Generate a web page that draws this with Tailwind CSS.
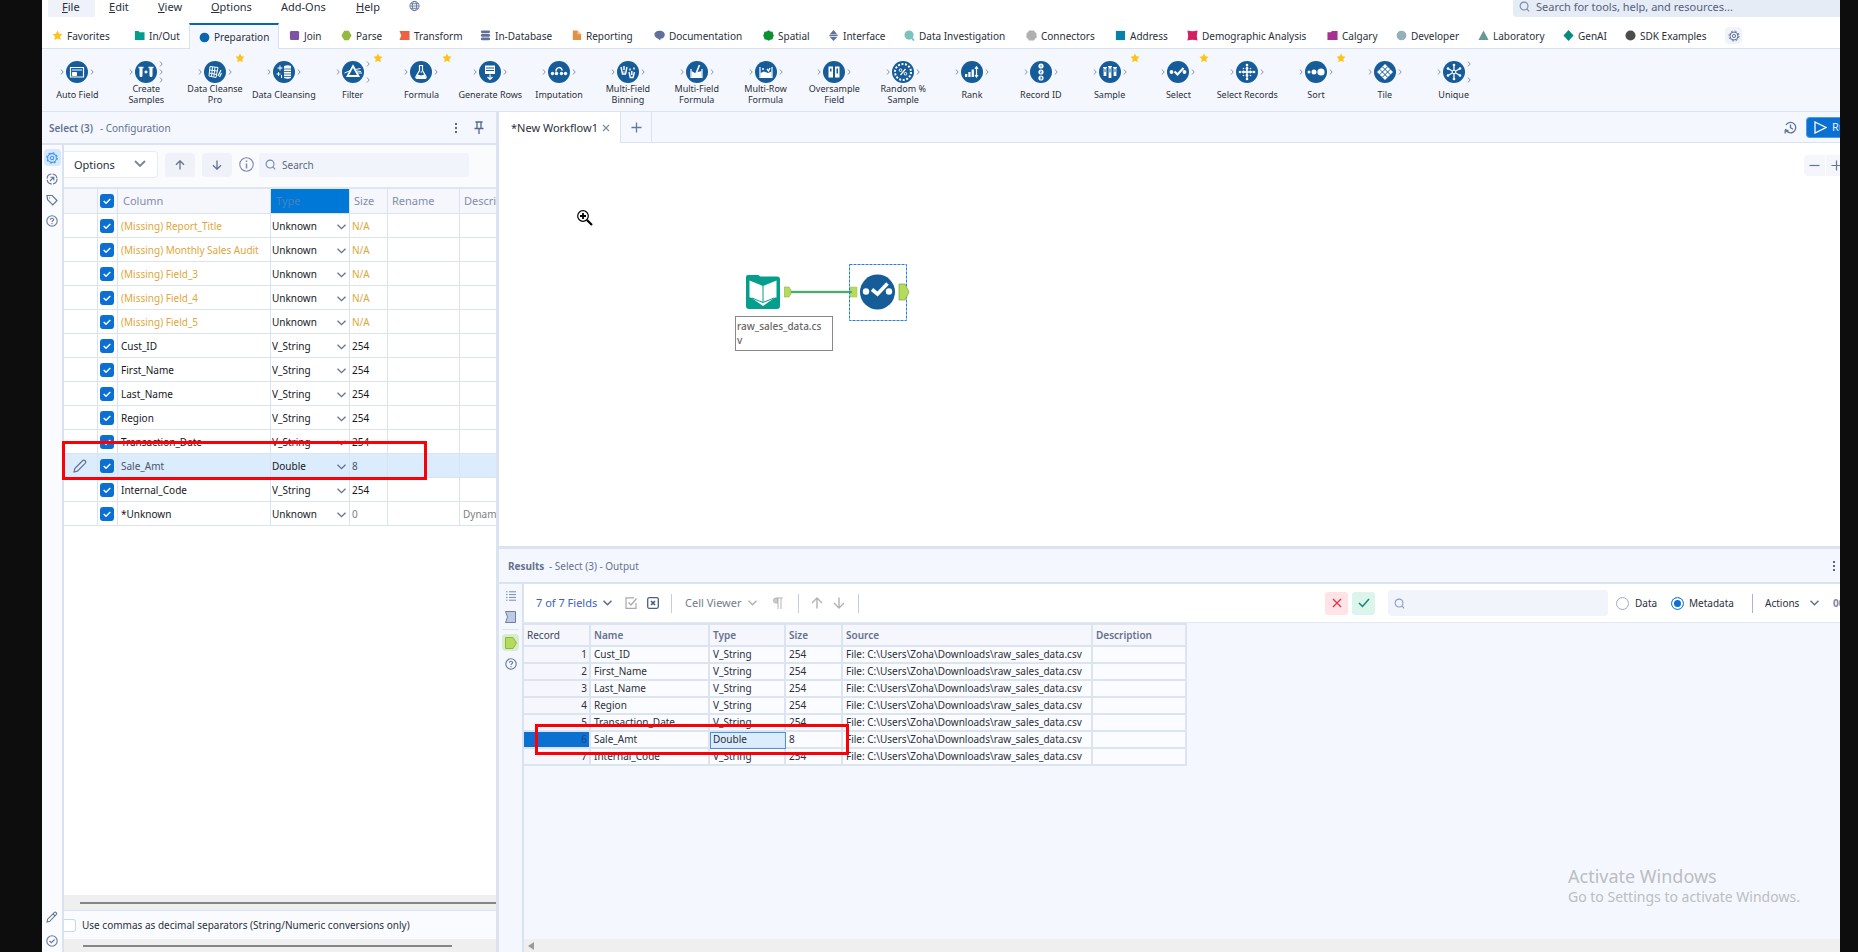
<!DOCTYPE html>
<html lang="en">
<head>
    <meta charset="UTF-8">
    <meta name="viewport" content="width=device-width, initial-scale=1.0">
    <title>Designer - New Workflow1</title>
    <script src="https://cdn.jsdelivr.net/npm/@tailwindcss/browser@4"></script>
</head>
<body class="h-screen overflow-hidden bg-[#0d0d0d] pl-[42px] pr-[18px] font-['Noto_Sans','Open_Sans',sans-serif] text-[11px] leading-4 text-[#2b2f3a]">
<div class="relative flex h-full flex-col overflow-hidden bg-[#f4f8fe]">

    <!-- Menu bar -->
    <header class="flex h-[23px] shrink-0 items-start justify-between bg-white">
        <nav class="flex pl-[6px]">
            <a href="#" class="h-[17px] w-[47px] bg-[#eff2f9] pl-[14px] leading-[14px]"><u>F</u>ile</a>
            <a href="#" class="w-[49px] pl-[14px] leading-[14px]"><u>E</u>dit</a>
            <a href="#" class="w-[53px] pl-[14px] leading-[14px]"><u>V</u>iew</a>
            <a href="#" class="w-[70px] pl-[14px] leading-[14px]"><u>O</u>ptions</a>
            <a href="#" class="w-[75px] pl-[14px] leading-[14px]">Add-Ons</a>
            <a href="#" class="w-[67px] pl-[14px] leading-[14px]"><u>H</u>elp</a>
            <button aria-label="Language" class="flex h-3 w-3">
                <svg width="11" height="12" viewBox="0 0 12 12" fill="none" stroke="#66759b"><circle cx="6" cy="6" r="5"/><ellipse cx="6" cy="6" rx="2.3" ry="5"/><path d="M1 6h10M1.7 3.5h8.6M1.7 8.5h8.6"/></svg>
            </button>
        </nav>
        <label class="flex h-[17px] w-[327px] items-start gap-[6px] rounded-bl bg-[#e6ecf5] pl-[6px]">
            <svg class="mt-px" width="11" height="11" viewBox="0 0 12 12" fill="none" stroke="#7a88ab" stroke-width="1.2"><circle cx="5.5" cy="5.5" r="4.3"/><path d="M8.6 8.6l2.4 2.6"/></svg>
            <input type="text" aria-label="Search" placeholder="Search for tools, help, and resources..." class="h-[13px] w-[260px] bg-transparent text-[11px] leading-[13px] outline-none placeholder:text-[#55607d]">
        </label>
    </header>

    <!-- Tool category tabs -->
    <div id="categories" class="flex h-[26px] shrink-0 items-stretch border-b border-[#d9e1ef] bg-white"></div>

    <!-- Tool palette -->
    <div class="h-[63px] shrink-0 border-b border-[#dbe3ef]">
        <div id="tools" class="ml-px flex w-[1445px]"></div>
    </div>

    <main class="flex min-h-0 flex-1">

        <!-- Configuration -->
        <section class="relative flex w-[454px] shrink-0 flex-col">
            <div class="flex h-[33px] shrink-0 items-center border-b-2 border-[#dbe3f0] pl-[7px] pr-3 text-[10px] text-[#66718f]">
                <b class="font-semibold">Select (3)</b><span class="ml-[7px]">- Configuration</span>
                <button aria-label="More" class="ml-auto mr-[16px]">
                    <svg width="4" height="12" viewBox="0 0 4 12" fill="#56658c"><path d="M1 1h2v2H1zM1 5h2v2H1zM1 9h2v2H1z"/></svg>
                </button>
                <button aria-label="Pin">
                    <svg width="10" height="13" viewBox="0 0 10 13" fill="none" stroke="#56658c" stroke-width="1.3"><path d="M1.5 1h7M3 1v6M7 1v6M.5 7.5h9M5 7.5V13"/></svg>
                </button>
            </div>
            <div class="flex min-h-0 flex-1">
                <div class="flex w-[22px] shrink-0 flex-col items-center gap-[4px] border-r-2 border-[#d9e2f1] bg-[#f9fbfe] pb-[3px] pt-[4px]">
                    <button aria-label="Configuration" class="flex h-[17px] w-[17px] items-center justify-center rounded-sm bg-[#d5e8fd]"><svg width="12" height="12" viewBox="0 0 12 12" fill="none" stroke="#3d94f0" stroke-width="1.1"><circle cx="6" cy="6" r="4.4"/><circle cx="6" cy="6" r="1.7"/><circle cx="6" cy="6" r="5.3" stroke-dasharray="2 2.16"/></svg></button>
                    <button aria-label="Navigation" class="flex h-[17px] w-[17px] items-center justify-center"><svg width="12" height="12" viewBox="0 0 12 12" fill="none" stroke="#66759b" stroke-width="1.1"><circle cx="6" cy="6" r="5" stroke-dasharray="6.5 1.35"/><path d="M4 8l3.6-3.6M4.5 4.2h3.3v3.3"/></svg></button>
                    <button aria-label="Annotation" class="flex h-[17px] w-[17px] items-center justify-center"><svg width="12" height="12" viewBox="0 0 12 12" fill="none" stroke="#66759b" stroke-width="1.2"><path d="M1 1.5h5.2l4.8 5-4.2 4.3L1.6 5.6z"/><path d="M3.6 3.6v1"/></svg></button>
                    <button aria-label="Help" class="flex h-[17px] w-[17px] items-center justify-center"><svg width="12" height="12" viewBox="0 0 12 12" fill="none" stroke="#66759b" stroke-width="1.1"><circle cx="6" cy="6" r="5.2"/><path d="M4.4 4.8c0-2 3.2-2 3.2-.1 0 1.1-1.6 1.1-1.6 2.2M6 8v1.2"/></svg></button>
                    <button aria-label="Edit" class="mt-auto flex h-[17px] w-[17px] items-center justify-center"><svg width="12" height="12" viewBox="0 0 12 12" fill="none" stroke="#66759b" stroke-width="1.1"><path d="M1 11l.6-2.8 6.6-6.6q1-1 2 0t0 2L3.7 10.3zM7 2.8l2 2"/></svg></button>
                    <button aria-label="Status" class="mt-[3px] flex h-[17px] w-[17px] items-center justify-center"><svg width="12" height="12" viewBox="0 0 12 12" fill="none" stroke="#66759b" stroke-width="1.1"><circle cx="6" cy="6" r="5.2"/><path d="M3.5 6l1.8 1.7 3.3-3.2"/></svg></button>
                </div>
                <div class="flex min-w-0 flex-1 flex-col bg-white">
                    <div class="flex h-[42px] shrink-0 items-center bg-[#fafbfd] pb-[3px]">
                        <div class="relative">
                            <select aria-label="Options" class="h-[27px] w-[94px] appearance-none rounded-r border border-l-0 border-[#e6eaf3] bg-white pl-[10px] text-[11px]"><option>Options</option></select>
                            <svg class="pointer-events-none absolute right-[12px] top-[9px]" width="12" height="8" viewBox="0 0 12 8" fill="none" stroke="#7a8399" stroke-width="1.8"><path d="M1 1l5 5 5-5"/></svg>
                        </div>
                        <button aria-label="Move up" class="ml-[7px] flex h-[24px] w-[30px] items-center justify-center rounded bg-[#eff2f8]"><svg width="10" height="10" viewBox="0 0 10 10" fill="none" stroke="#66718f" stroke-width="1.3"><path d="M5 9.5V1M1 4.8l4-4 4 4"/></svg></button>
                        <button aria-label="Move down" class="ml-[7px] flex h-[24px] w-[30px] items-center justify-center rounded bg-[#eff2f8]"><svg width="10" height="10" viewBox="0 0 10 10" fill="none" stroke="#66718f" stroke-width="1.3"><path d="M5 .5V9M1 5.2l4 4 4-4"/></svg></button>
                        <svg class="ml-[7px]" width="15" height="15" viewBox="0 0 15 15" fill="none" stroke="#7c8bb0" stroke-width="1.1"><circle cx="7.5" cy="7.5" r="6.7"/><path d="M7.5 6.5v5M7.5 3.5v1.5" stroke-width="1.5"/></svg>
                        <label class="ml-[5px] flex h-[24px] w-[210px] items-center gap-[6px] rounded bg-[#f1f4fa] pl-[6px]">
                            <svg width="11" height="11" viewBox="0 0 12 12" fill="none" stroke="#7a88ab" stroke-width="1.2"><circle cx="5.5" cy="5.5" r="4.3"/><path d="M8.6 8.6l2.4 2.6"/></svg>
                            <input type="text" aria-label="Search columns" placeholder="Search" class="w-[150px] bg-transparent text-[10px] outline-none placeholder:text-[#5d6883]">
                        </label>
                    </div>
                    <div class="min-h-0 flex-1 overflow-hidden">
                        <table class="w-[540px] table-fixed border-separate border-spacing-0 border-t-2 border-[#dfe6f2] text-[10px]">
                            <colgroup><col class="w-[34px]"><col class="w-[20px]"><col class="w-[153px]"><col class="w-[79px]"><col class="w-[38px]"><col class="w-[72px]"><col class="w-[144px]"></colgroup>
                            <thead>
                                <tr class="h-[25px] bg-[#f5f7fc] text-left text-[11px] text-[#828da8] [&>th]:border-b [&>th]:border-r [&>th]:border-[#dbe3f2] [&>th]:font-normal">
                                    <th></th>
                                    <th class="pl-[2px]">
                                        <label class="relative block h-[14px] w-[14px]"><input type="checkbox" checked aria-label="Select all" class="block h-[14px] w-[14px] appearance-none rounded-[3px] border border-[#9aa6c0] checked:border-0 checked:bg-[#0b70d2]"><svg class="absolute left-[3px] top-[4px]" width="8" height="7" viewBox="0 0 8 7" fill="none" stroke="#fff" stroke-width="1.4"><path d="M.7 3l2.3 2.3L7.3 1"/></svg></label>
                                    </th>
                                    <th class="pl-[5px]">Column</th>
                                    <th class="bg-[#0078d7] pl-[5px] text-[#4384bf]">Type</th>
                                    <th class="pl-[4px]">Size</th>
                                    <th class="pl-[4px]">Rename</th>
                                    <th class="pl-[4px]">Description</th>
                                </tr>
                            </thead>
                            <tbody id="columns"></tbody>
                        </table>
                    </div>
                    <div class="flex h-[16px] shrink-0 items-center border-b border-[#dbe3f2] bg-[#efefef] pl-[16px]"><div class="h-[2px] flex-1 bg-[#868686]"></div></div>
                    <label class="flex h-[28px] shrink-0 items-center gap-[6px] bg-[#f9fbfe] text-[10px]">
                        <input type="checkbox" class="h-[13px] w-[12px] appearance-none rounded-r-[3px] border border-l-0 border-[#ccd7ea] bg-white">
                        Use commas as decimal separators (String/Numeric conversions only)
                    </label>
                    <div class="flex h-[13px] shrink-0 items-center bg-[#efefef] pl-[19px]"><div class="h-[2px] w-[369px] bg-[#868686]"></div></div>
                </div>
            </div>
            <!-- highlight around the Sale_Amt row -->
            <div class="pointer-events-none absolute left-[20px] top-[329px] h-[39px] w-[365px] border-[3px] border-[#fb0007]"></div>
        </section>

        <div class="w-[3px] shrink-0 bg-[#dbe3f0]"></div>

        <div class="flex min-w-0 flex-1 flex-col">
            <!-- Workflow tabs -->
            <div class="flex h-[31px] shrink-0 items-stretch">
                <div class="flex w-[121px] items-center justify-between bg-white pl-[12px] pr-[10px]">
                    <span>*New Workflow1</span>
                    <button aria-label="Close"><svg width="8" height="8" viewBox="0 0 8 8" stroke="#7f8db0" stroke-width="1.3"><path d="M1 1l6 6M7 1L1 7"/></svg></button>
                </div>
                <button aria-label="New tab" class="flex w-[32px] items-center justify-center border-x border-b border-[#dbe3f2]"><svg width="11" height="11" viewBox="0 0 11 11" stroke="#66759b" stroke-width="1.3"><path d="M5.5.5v10M.5 5.5h10"/></svg></button>
                <div class="flex flex-1 items-center justify-end border-b border-[#dbe3f2]">
                    <button aria-label="History" class="mr-[9px]"><svg width="13" height="13" viewBox="0 0 13 13" fill="none" stroke="#66718f" stroke-width="1.3"><path d="M1.5 8A5.2 5.2 0 1 0 2 4M4.5 9.5H1.2V12.5M6.5 3.5v3.2L9 8.2"/></svg></button>
                    <button class="flex h-[21px] w-[34px] items-center gap-[5px] overflow-hidden rounded-l border border-r-0 border-[#4c9be8] bg-[#0b70d2] pl-[7px] text-[#e6f1fc]"><svg class="shrink-0" width="13" height="13" viewBox="0 0 13 13" fill="none" stroke="#fff" stroke-width="1.3"><path d="M1 1l11 5.5L1 12z"/></svg>Run</button>
                </div>
            </div>

            <!-- Canvas -->
            <section class="relative min-h-0 flex-1 bg-white">
                <div class="absolute right-0 top-[12px] flex gap-px">
                    <button aria-label="Zoom out" class="flex h-[21px] w-[21px] items-center justify-center rounded-l bg-[#f4f6fb]"><svg width="11" height="11" viewBox="0 0 11 11" stroke="#66759b" stroke-width="1.2"><path d="M.5 5.5h10"/></svg></button>
                    <button aria-label="Zoom in" class="flex h-[21px] w-[14px] items-center overflow-hidden bg-[#f4f6fb] pl-[5px]"><svg class="shrink-0" width="11" height="11" viewBox="0 0 11 11" stroke="#66759b" stroke-width="1.2"><path d="M.5 5.5h10M5.5.5v10"/></svg></button>
                </div>
                <svg class="absolute left-[77px] top-[66px]" width="18" height="18" viewBox="0 0 18 18" fill="none" stroke="#000"><circle cx="7" cy="7" r="5.3" stroke-width="1.2"/><path d="M4 7h6M7 4v6" stroke-width="1.8"/><path d="M11 11l5 5" stroke-width="2.2"/></svg>

                <!-- input tool -->
                <svg class="absolute left-[246px] top-[131px]" width="36" height="36" viewBox="0 0 36 36">
                    <path d="M1 3q0-2 2-2h10q1.5 0 2 1.5h17q3 0 3 3V32q0 3-3 3H4q-3 0-3-3z" fill="#049e8c"/>
                    <path d="M4.5 6.500L18 12l13.500-5.500V23.500h-1.500L18 32 6 23.500H4.500z" fill="#fff"/><path d="M18 11v17M7 24l11 4.500L29 24" fill="none" stroke="#049e8c"/>
                </svg>
                <svg class="absolute left-[285px] top-[141px]" width="74" height="16" viewBox="0 0 74 16">
                    <path d="M0 3h5l2 3v4l-2 3H0z" fill="#b5db5c" stroke="#8ab55a" stroke-width=".6"/><path d="M66 3h7v10h-7z" fill="#b5db5c" stroke="#a4c95c" stroke-width=".6"/>
                    <path d="M7 8h61" stroke="#7ccb9a" stroke-width="2.4"/><path d="M7 8h61" stroke="#1a8a45"/>
                </svg>
                <div class="absolute left-[236px] top-[173px] h-[35px] w-[98px] border border-[#878787] bg-white pl-px pr-[8px] pt-[2px] text-[10px] font-medium leading-[14px] text-[#666] [overflow-wrap:anywhere]">raw_sales_data.csv</div>
                <!-- select tool -->
                <svg class="absolute left-[349px] top-[120px]" width="64" height="60" viewBox="0 0 64 60">
                    <rect x="1.5" y="1.5" width="57" height="56" fill="none" stroke="#1f7fe0" stroke-dasharray="3 1"/>
                    <circle cx="29.500" cy="29" r="17.5" fill="#155c99"/><circle cx="18" cy="28.5" r="3.2" fill="#fff"/><circle cx="41" cy="28.5" r="3.2" fill="#fff"/><path d="M24 26.500l5.500 4.500 10-10.500" fill="none" stroke="#fff" stroke-width="3.6"/>
                    <path d="M51 21h6l4 8-4 8h-6z" fill="#b5db5c" stroke="#7fae3e" stroke-width=".8"/>
                </svg>
            </section>

            <!-- Results -->
            <section class="relative flex h-[406px] shrink-0 flex-col border-t-[3px] border-[#dbe3f0]">
                <div class="flex h-[35px] shrink-0 items-center justify-between border-b-2 border-[#dbe3f0] pl-[9px] pr-[4px] text-[10px] text-[#66718f]">
                    <p><b class="mr-[2px] font-bold">Results</b> - Select (3) - Output</p>
                    <button aria-label="More"><svg width="4" height="12" viewBox="0 0 4 12" fill="#56658c"><path d="M1 1h2v2H1zM1 5h2v2H1zM1 9h2v2H1z"/></svg></button>
                </div>
                <div class="flex min-h-0 flex-1">
                    <div class="flex w-[25px] shrink-0 flex-col items-center gap-[4px] border-r-2 border-[#d9e2f1] pt-[3px]">
                        <button aria-label="Messages" class="flex h-[17px] w-[17px] items-center justify-center"><svg width="10" height="10" viewBox="0 0 10 10" fill="none" stroke="#7886ab"><path d="M0 .8h1.5M3 .8h7M0 3.6h1.5M3 3.6h7M0 6.4h1.5M3 6.4h7M0 9.2h1.5M3 9.2h7"/></svg></button>
                        <button aria-label="Input anchor" class="flex h-[17px] w-[17px] items-center justify-center"><svg width="11" height="12" viewBox="0 0 11 12" fill="#bccae6" stroke="#6f7fa6"><path d="M.5.5h10v11H.5l2-5.5z"/></svg></button>
                        <div class="h-px w-[17px] shrink-0 bg-[#dbe3f2]"></div>
                        <button aria-label="Output anchor" class="flex h-[17px] w-[17px] items-center justify-center rounded-sm bg-[#d9ecc9]"><svg width="12" height="12" viewBox="0 0 12 12" fill="#b5db5c" stroke="#8cb83f"><path d="M.5.5H8L11.5 6 8 11.5H.5z"/></svg></button>
                        <button aria-label="Help" class="flex h-[17px] w-[17px] items-center justify-center"><svg width="12" height="12" viewBox="0 0 12 12" fill="none" stroke="#66759b" stroke-width="1.1"><circle cx="6" cy="6" r="5.2"/><path d="M4.4 4.8c0-2 3.2-2 3.2-.1 0 1.1-1.6 1.1-1.6 2.2M6 8v1.2"/></svg></button>
                    </div>
                    <div class="flex min-w-0 flex-1 flex-col">
                        <div class="flex h-[39px] shrink-0 items-center border-b border-[#e2e7f2] bg-white pl-[12px]">
                            <button class="flex w-[89px] items-center gap-[6px] text-[#3c61c4]">7 of 7 Fields<svg width="9" height="6" viewBox="0 0 9 6" fill="none" stroke="#5a6a94" stroke-width="1.5"><path d="M.5.8l4 4 4-4"/></svg></button>
                            <button aria-label="Select all fields" class="w-[22px]"><svg width="13" height="12" viewBox="0 0 13 12" fill="none" stroke="#a9a9a9" stroke-width="1.2"><path d="M9 .8H1v10.5h10V6M3.5 5.5L6 8l5.5-6.5"/></svg></button>
                            <button aria-label="Clear fields"><svg width="12" height="12" viewBox="0 0 12 12" fill="none" stroke="#4c5d86" stroke-width="1.3"><rect x=".7" y=".7" width="10.6" height="10.6" rx="1.5"/><path d="M4 4l4 4M8 4L4 8" stroke-width="1.7"/></svg></button>
                            <div class="ml-[12px] h-[19px] w-px bg-[#c3cde0]"></div>
                            <button class="ml-[13px] flex w-[82px] items-center gap-[6px] text-[#757b8a]">Cell Viewer<svg width="9" height="6" viewBox="0 0 9 6" fill="none" stroke="#b0b0b0" stroke-width="1.3"><path d="M.5.8l4 4 4-4"/></svg></button>
                            <button aria-label="Show whitespace" class="ml-[6px]"><svg width="10" height="12" viewBox="0 0 10 12" stroke="#b4b4b4" fill="none"><path d="M4.5 1H3a2.5 2.5 0 0 0 0 5h1.5z" fill="#ccc"/><path d="M4 1h6M5 1v11M8 1v11"/></svg></button>
                            <div class="ml-[15px] h-[19px] w-px bg-[#c3cde0]"></div>
                            <button aria-label="Previous" class="ml-[12px]"><svg width="12" height="12" viewBox="0 0 12 12" fill="none" stroke="#b2b2b2" stroke-width="1.4"><path d="M6 11.5V1M1 6l5-5 5 5"/></svg></button>
                            <button aria-label="Next" class="ml-[10px]"><svg width="12" height="12" viewBox="0 0 12 12" fill="none" stroke="#b2b2b2" stroke-width="1.4"><path d="M6 .5V11M1 6l5 5 5-5"/></svg></button>
                            <div class="ml-[13px] h-[19px] w-px bg-[#c3cde0]"></div>

                            <button aria-label="Cancel" class="ml-auto flex h-[23px] w-[23px] items-center justify-center rounded-[3px] bg-[#ffe3e6]"><svg width="10" height="10" viewBox="0 0 10 10" stroke="#d93a50" stroke-width="1.4"><path d="M1 1l8 8M9 1L1 9"/></svg></button>
                            <button aria-label="Apply" class="ml-[4px] flex h-[23px] w-[23px] items-center justify-center rounded-[3px] bg-[#dbf4ec]"><svg width="12" height="10" viewBox="0 0 12 10" fill="none" stroke="#12876a" stroke-width="1.5"><path d="M1 5l3.5 3.5L11 1"/></svg></button>
                            <label class="ml-[13px] flex h-[26px] w-[220px] items-center rounded bg-[#f1f4fa] pl-[6px]">
                                <svg width="11" height="11" viewBox="0 0 12 12" fill="none" stroke="#8f9cc0" stroke-width="1.2"><circle cx="5.5" cy="5.5" r="4.3"/><path d="M8.6 8.6l2.4 2.6"/></svg>
                                <input type="text" aria-label="Search results" class="w-[180px] bg-transparent pl-1 text-[11px] outline-none">
                            </label>
                            <label class="ml-[8px] flex w-[55px] items-center gap-[6px] text-[10px]"><input type="radio" name="view" class="h-[13px] w-[13px] shrink-0 appearance-none rounded-full border border-[#9caac9] bg-white">Data</label>
                            <label class="flex w-[74px] items-center gap-[5px] text-[10px]"><input type="radio" name="view" checked class="h-[13px] w-[13px] shrink-0 appearance-none rounded-full border border-[#2b83dc] bg-[#0b70d2] shadow-[inset_0_0_0_2px_#fff]">Metadata</label>
                            <div class="ml-[7px] h-[19px] w-px bg-[#a9b6d1]"></div>
                            <button class="ml-[12px] flex w-[54px] items-center justify-between text-[10px]">Actions<svg width="9" height="6" viewBox="0 0 9 6" fill="none" stroke="#66718f" stroke-width="1.5"><path d="M.5.8l4 4 4-4"/></svg></button>
                            <button class="ml-[14px] w-[7px] overflow-hidden text-left text-[10px] font-bold text-[#7b84a0]">00</button>
                        </div>
                        <div class="min-h-0 flex-1">
                            <table class="w-[663px] table-fixed border-separate border-spacing-0 border-t-2 border-[#dde4f1] text-[10px]">
                                <colgroup><col class="w-[67px]"><col class="w-[119px]"><col class="w-[76px]"><col class="w-[57px]"><col class="w-[250px]"><col class="w-[94px]"></colgroup>
                                <thead>
                                    <tr class="h-[22px] bg-[#f5f7fc] text-left text-[#66718f] [&>th]:border-b-2 [&>th]:border-r-2 [&>th]:border-[#dde4f1] [&>th]:py-0 [&>th]:pl-[3px] [&>th]:font-semibold">
                                        <th class="text-[#3f4657]"><span class="font-normal">Record</span></th><th>Name</th><th>Type</th><th>Size</th><th>Source</th><th>Description</th>
                                    </tr>
                                </thead>
                                <tbody id="records"></tbody>
                            </table>
                        </div>
                        <div class="flex h-[13px] shrink-0 items-center bg-[#efefef] pl-[4px]"><svg width="6" height="8" viewBox="0 0 6 8" fill="#9a9a9a"><path d="M6 0v8L0 4z"/></svg></div>
                    </div>
                </div>
                <!-- highlight around record 6 -->
                <div class="pointer-events-none absolute left-[36px] top-[175px] h-[31px] w-[314px] border-[3px] border-[#fb0007]"></div>
                <div class="pointer-events-none absolute bottom-[46px] right-[46px] w-[226px] whitespace-nowrap text-[#bbbdc1]">
                    <p class="text-[18px] leading-6">Activate Windows</p>
                    <p class="text-[14px] leading-[18px]">Go to Settings to activate Windows.</p>
                </div>
            </section>
        </div>
    </main>
</div>

<script>
    const star = '<path d="M6 .5l1.7 3.5 3.8.5-2.8 2.7.7 3.8L6 9.2 2.6 11l.7-3.8L.5 4.5 4.3 4z" fill="#fcc419"/>';

    // [label, width, icon]
    const categories = [
        ['Favorites', 82, star],
        ['In/Out', 65, '<path d="M1 1h4l1 1.5h5.5V11H1z" fill="#049e8c"/>'],
        ['Preparation', 90, '<circle cx="6" cy="6" r="5.3" fill="#0a64ae"/>'],
        ['Join', 52, '<rect x="1" y="1" width="10" height="10" rx="1.5" fill="#7d52a5"/>'],
        ['Parse', 58, '<path d="M3.5.8h5L11.5 6l-3 5.2h-5L.5 6z" fill="#95b83f"/>'],
        ['Transform', 81, '<path d="M.5 1h11v10H.5L2.5 6z" fill="#ee6142"/>'],
        ['In-Database', 91, '<g fill="#61709a"><rect x="1" y=".5" width="10" height="3" rx="1.5"/><rect x="1" y="4.4" width="10" height="3" rx="1.5"/><rect x="1" y="8.3" width="10" height="3" rx="1.5"/></g>'],
        ['Reporting', 83, '<path d="M2 .5h5l4 4V11H2z" fill="#e19045"/><path d="M7 .5v4h4" fill="#f4c795"/>'],
        ['Documentation', 109, '<path d="M6 .8c8 0 7 8.5 1 8.7L7 11.5 4 9.2C-1 8-1 .8 6 .8z" fill="#61709a"/>'],
        ['Spatial', 65, '<path d="M6 .3l2 1.2 2.5.5.5 2.5L12 6l-1 1.5-.5 2.5-2.5.5-2 1.2-2-1.2-2.5-.5L1 7.5 0 6l1-1.5L1.5 2 4 1.5z" fill="#0b9131"/>'],
        ['Interface', 76, '<path d="M6 0l4 4.5H2zM6 12l4-4.5H2zM1.5 5.3h9v1.4h-9z" fill="#61709a"/>'],
        ['Data Investigation', 122, '<circle cx="5.5" cy="5.5" r="5" fill="#7cc3bd"/><path d="M8 8l3 3.5" stroke="#7cc3bd" stroke-width="2"/>'],
        ['Connectors', 89, '<path d="M3.5.5h5L11.5 4v4l-3 3.5h-5L.5 8V4z" fill="#b0b0b0"/>'],
        ['Address', 72, '<path d="M1 1h10v10H1z" fill="#0781a7"/>'],
        ['Demographic Analysis', 140, '<path d="M.5.5Q6 2 11.5.5 10 6 11.5 11.5 6 10 .5 11.5 2 6 .5.5z" fill="#d3215f"/>'],
        ['Calgary', 69, '<path d="M.5 2.5h3.5L5.5 1h6v10H.5z" fill="#a93193"/>'],
        ['Developer', 82, '<circle cx="6" cy="6" r="5.3" fill="#93b1b6"/>'],
        ['Laboratory', 85, '<path d="M6 .5L11.5 11H.5z" fill="#659a97"/>'],
        ['GenAI', 62, '<path d="M6 0l5.5 6L6 12 .5 6z" fill="#078a80"/>'],
        ['SDK Examples', 96, '<circle cx="6" cy="6" r="5.5" fill="#4c4c4c"/>'],
    ];

    document.getElementById('categories').innerHTML = categories.map(([label, width, icon], i) => `
        <button class="flex items-center gap-[4px] whitespace-nowrap text-[10px] ${i === 2 ? 'relative -mb-px border-t-2 border-x border-x-[#d9e1ef] border-t-[#0a64ae] bg-[#f4f8fe] pl-[9px]' : 'pl-[10px]'}" style="width:${width}px">
            <svg class="shrink-0" width="11" height="11" viewBox="0 0 12 12">${icon}</svg>${label}
        </button>`).join('') + `
        <button aria-label="Settings" class="ml-[14px] flex h-[17px] w-[17px] items-center justify-center self-center rounded-sm bg-[#eff3fa]">
            <svg width="12" height="12" viewBox="0 0 12 12" fill="none" stroke="#66759b"><circle cx="6" cy="6" r="4"/><circle cx="6" cy="6" r="1.6"/><circle cx="6" cy="6" r="5" stroke-dasharray="2 1.93"/></svg>
        </button>`;

    // glyphs are drawn in white on a 22px disc
    // [label, glyph, output anchors, favourite]
    const tools = [
        ['Auto Field', '<path d="M4.5 6.5h13v9.5h-13z" fill="none" stroke="#fff" stroke-width="1.2"/><path d="M6 9h10M6.5 14.5v-3h4v3z" stroke="#fff" fill="#fff"/>', 1],
        ['Create<br>Samples', '<path d="M3.5 6.5h5M13.5 6.5h5M9.5 11h3M11 9.5v3" stroke="#fff" stroke-width="1.3"/><path d="M4.5 7h3v7.500a1.5 1.5 0 0 1-3 0zM14.5 7h3v7.500a1.5 1.5 0 0 1-3 0z" fill="#fff"/>', 3],
        ['Data Cleanse<br>Pro', '<path d="M6 5.5l8 1-2 10-7-1.5zM5.7 9l7.5 1M5.4 12l7.3 1.5M8.5 6l-1 9.5M11 6.2l-1.2 9.5" fill="none" stroke="#fff"/><path d="M14 15l3-6M15.5 16l2-4" stroke="#fff" stroke-width="1.2"/>', 1, true],
        ['Data Cleansing', '<path d="M11 5q4-1.5 7 0v12q-3 1.5-7 0z" fill="#fff"/><path d="M11 8h7M11 10.5h7M11 13h7M11 15.5h7" stroke="#155c99" stroke-width=".8"/><path d="M7 4.5v5M4.5 7h5M5.5 11v4M3.5 13h4M8.5 14v3" stroke="#fff"/>', 1],
        ['Filter', '<path d="M11 5l5.5 10h-11z" fill="none" stroke="#fff" stroke-width="1.8"/><path d="M2.5 12l6-2.5M13.5 8.5l5-1M15 12h5M15 10l4 .5" stroke="#fff"/>', 2, true],
        ['Formula', '<path d="M9.5 4.5h3v5l3.5 6q.5 2-1 2H7q-1.5 0-1-2l3.5-6z" fill="none" stroke="#fff" stroke-width="1.2"/><path d="M7.5 13.5l3.5 1 3.5-1 1.5 3.5H6z" fill="#fff"/><circle cx="11.3" cy="11" r=".8" fill="#fff"/>', 1, true],
        ['Generate Rows', '<path d="M6 4.5h10V13H6z" fill="#fff"/><path d="M7 7h8M7 9.5h8" stroke="#155c99"/><path d="M11 13.5v5M8.5 16l2.5 2.5 2.5-2.5" fill="none" stroke="#fff" stroke-width="1.2"/>', 1],
        ['Imputation', '<g fill="#fff"><circle cx="4.5" cy="12.5" r="1.7"/><circle cx="8.5" cy="12.5" r="1.7"/><circle cx="13.5" cy="12.5" r="1.7"/><circle cx="17.5" cy="12.5" r="1.7"/></g><path d="M8 10.5c0-5 6-5 6-1" fill="none" stroke="#fff" stroke-width="1.5"/>', 1],
        ['Multi-Field<br>Binning', '<path d="M4 6l1.5 7h3L10 6M12 11l1.3 5.5h2.7l1.5-5.5" fill="none" stroke="#fff" stroke-width="1.4"/><path d="M7 5v4M14.8 10v4M7 10.5v1M13 7.5v2M17 6.5v2" stroke="#fff" stroke-width="1.5"/>', 1],
        ['Multi-Field<br>Formula', '<path d="M5 8v8.5h11V8" fill="none" stroke="#fff" stroke-width="1.2"/><path d="M5.5 10l3.5 2 3-1 3.5-1v6.5h-10z" fill="#fff"/><path d="M9.5 14l4-10" stroke="#fff" stroke-width="1.6"/>', 1],
        ['Multi-Row<br>Formula', '<path d="M5 6v10.5h12V6" fill="none" stroke="#fff" stroke-width="1.2"/><path d="M5.5 12l3.5-1.5 4 1.5 3.5-1.5v6h-11z" fill="#fff"/><path d="M7 8h2M12 8l1.5 2L15 7" stroke="#fff" stroke-width="1.4" fill="none"/>', 1],
        ['Oversample<br>Field', '<path d="M5.5 5.5h4.5v11H5.5zM12 5.5h4.5v11H12z" fill="#fff"/><path d="M7 7.5h1.5v3H7zM13.5 7.5H15v5h-1.5z" fill="#155c99"/>', 1],
        ['Random %<br>Sample', '<circle cx="11" cy="11" r="8" fill="none" stroke="#fff" stroke-width="2" stroke-dasharray="2 1.59"/><path d="M8.5 14l5-6" stroke="#fff" stroke-width="1.2"/><circle cx="8.5" cy="9.2" r="1.3" fill="none" stroke="#fff"/><circle cx="13.5" cy="12.8" r="1.3" fill="none" stroke="#fff"/>', 1],
        ['Rank', '<path d="M4 13h2.3v3H4zM7.3 11h2.3v5H7.3zM10.6 8.5h2.3V16h-2.3z" fill="#fff"/><path d="M15.5 6v10M14 7.8l1.5-2 1.5 2M14 14l1.5 2 1.5-2" fill="none" stroke="#fff" stroke-width="1.2"/>', 1],
        ['Record ID', '<circle cx="11" cy="5" r="2.6" fill="#fff"/><circle cx="11" cy="11" r="2.6" fill="#fff"/><circle cx="11" cy="17" r="2.6" fill="#fff"/><path d="M11 3.8v2.4M10.2 10.2h1.5l-1.5 1.7h1.6M10.2 16h1.5v2h-1.5M10.5 17h1.2" fill="none" stroke="#155c99" stroke-width=".7"/>', 1],
        ['Sample', '<path d="M4 6.5h4M9 5.5h4M14 6.5h4" stroke="#fff" stroke-width="1.2"/><path d="M4.6 7h2.8v8h-2.8zM9.6 6h2.8v11H9.6zM14.6 7h2.8v8h-2.8z" fill="#fff"/><path d="M6 8v3M11 7.5v4M16 8v3" stroke="#155c99"/>', 1, true],
        ['Select', '<circle cx="4.5" cy="11" r="1.9" fill="#fff"/><circle cx="17.5" cy="11" r="1.9" fill="#fff"/><path d="M7.5 10.5l3 3 6-6.5" fill="none" stroke="#fff" stroke-width="2.2"/>', 1, true],
        ['Select Records', '<path d="M11 3v16M3 11h16" stroke="#fff" stroke-width="1.2" stroke-dasharray="2 .6"/><g fill="#fff"><circle cx="11" cy="11" r="1.8"/><circle cx="7.5" cy="11" r="1.4"/><circle cx="14.5" cy="11" r="1.4"/><circle cx="11" cy="7.5" r="1.4"/><circle cx="11" cy="14.5" r="1.4"/><circle cx="11" cy="4" r="1.3"/><circle cx="11" cy="18" r="1.3"/><circle cx="4" cy="11" r="1.3"/><circle cx="18" cy="11" r="1.3"/><circle cx="7.5" cy="7.5" r=".8"/><circle cx="14.5" cy="7.5" r=".8"/><circle cx="7.5" cy="14.5" r=".8"/><circle cx="14.5" cy="14.5" r=".8"/></g>', 1],
        ['Sort', '<circle cx="4" cy="11" r="1.5" fill="#fff"/><circle cx="9" cy="11" r="2.5" fill="#fff"/><circle cx="16" cy="11" r="3.6" fill="#fff"/>', 1, true],
        ['Tile', '<path d="M11 3l8 8-8 8-8-8z" fill="#fff"/><path d="M8.3 5.7l8 8M5.7 8.3l8 8M13.7 5.7l-8 8M16.3 8.3l-8 8" stroke="#155c99"/>', 1],
        ['Unique', '<path d="M11 3.5v15M4.5 7.3l13 7.4M4.5 14.7l13-7.4" stroke="#fff" stroke-width="1.3"/><g fill="#fff"><circle cx="11" cy="4" r="1.3"/><circle cx="11" cy="18" r="1.3"/><circle cx="5" cy="7.5" r="1.3"/><circle cx="17" cy="7.5" r="1.3"/><circle cx="5" cy="14.5" r="1.3"/><circle cx="17" cy="14.5" r="1.3"/></g><circle cx="11" cy="11" r="1.8" fill="#155c99" stroke="#fff"/>', 2],
    ];
    const outputs = { 1: [12], 2: [4, 20], 3: [4, 12, 20] };

    document.getElementById('tools').innerHTML = tools.map(([label, glyph, outs, fav]) => `
        <button class="relative flex min-w-0 flex-1 flex-col items-center pt-[11px]">
            <svg width="36" height="24" viewBox="0 0 36 24" fill="none">
                <path d="M2 9.5l2.2 2.5L2 14.5" stroke="#8594b8"/>
                ${outputs[outs].map(y => `<path d="M32 ${y - 2.5}l2.2 2.5-2.2 2.5" stroke="#8594b8"/>`).join('')}
                <g transform="translate(7 1)"><circle cx="11" cy="11" r="11" fill="#155c99"/>${glyph}</g>
            </svg>
            ${fav ? `<svg class="absolute right-[4px] top-[4px]" width="10" height="10" viewBox="0 0 12 12">${star}</svg>` : ''}
            <span class="flex h-[20px] items-center whitespace-nowrap text-[9px] leading-[11px]">${label}</span>
        </button>`).join('');

    const missing = ['Report_Title', 'Monthly Sales Audit', 'Field_3', 'Field_4', 'Field_5'];
    const fields = [
        ['Cust_ID', 'V_String', '254'],
        ['First_Name', 'V_String', '254'],
        ['Last_Name', 'V_String', '254'],
        ['Region', 'V_String', '254'],
        ['Transaction_Date', 'V_String', '254'],
        ['Sale_Amt', 'Double', '8'],
        ['Internal_Code', 'V_String', '254'],
    ];

    const rows = [
        ...missing.map(name => [`(Missing) ${name}`, 'Unknown', 'N/A', 'text-[#dfa63a]']),
        ...fields,
        ['*Unknown', 'Unknown', '0'],
    ];
    const pencil = '<svg class="ml-[9px]" width="14" height="14" viewBox="0 0 14 14" fill="none" stroke="#66718f" stroke-width="1.2"><path d="M1 13l.8-3.5 7.7-7.7q1.3-1.2 2.6 0t0 2.6L4.4 12.2z"/></svg>';

    document.getElementById('columns').innerHTML = rows.map(([name, type, size, tone = 'text-[#16181d]']) => {
        const current = name === 'Sale_Amt';
        return `
        <tr class="h-[24px] ${current ? 'bg-[#dbecfd] text-[#4d5565]' : `bg-white ${tone}`} [&>td]:border-b [&>td]:border-r [&>td]:border-[#dbe3f2] [&>td]:py-0">
            <td>${current ? pencil : ''}</td>
            <td class="pl-[2px]"><label class="relative block h-[14px] w-[14px]"><input type="checkbox" checked aria-label="${name}" class="block h-[14px] w-[14px] appearance-none rounded-[3px] border border-[#9aa6c0] checked:border-0 checked:bg-[#0b70d2]"><svg class="absolute left-[3px] top-[4px]" width="8" height="7" viewBox="0 0 8 7" fill="none" stroke="#fff" stroke-width="1.4"><path d="M.7 3l2.3 2.3L7.3 1"/></svg></label></td>
            <td class="whitespace-nowrap pl-[3px]">${name}</td>
            <td class="relative"><select aria-label="Type of ${name}" class="block h-[20px] w-full appearance-none bg-transparent pl-px text-[10px] text-[#16181d]"><option>${type}</option></select><svg class="pointer-events-none absolute right-[3px] top-[10px]" width="9" height="6" viewBox="0 0 9 6" fill="none" stroke="#66718f" stroke-width="1.3"><path d="M.5.7l4 4 4-4"/></svg></td>
            <td class="pl-[2px] ${name === '*Unknown' ? 'text-[#808080]' : ''}">${size}</td>
            <td></td>
            <td class="whitespace-nowrap pl-[3px] text-[#808080]">${name === '*Unknown' ? 'Dynamic or Unknown Fields' : ''}</td>
        </tr>`;
    }).join('');

    document.getElementById('records').innerHTML = fields.map(([name, type, size], i) => {
        const current = name === 'Sale_Amt';
        return `
        <tr class="h-[17px] bg-[#fafcff] leading-[15px] [&>td]:border-b-2 [&>td]:border-r-2 [&>td]:border-[#dde4f1] [&>td]:py-0 [&>td]:pl-[3px]">
            <td class="pr-[2px] text-right ${current ? 'bg-[#0b70d2] text-[#1d4a7a]' : 'bg-[#f5f7fc]'}">${i + 1}</td>
            <td>${name}</td>
            <td class="${current ? 'bg-[#dbecfd] outline-1 -outline-offset-1 outline-[#4c94da]' : ''}">${type}</td>
            <td>${size}</td>
            <td class="whitespace-nowrap">File: C:\\Users\\Zoha\\Downloads\\raw_sales_data.csv</td>
            <td></td>
        </tr>`;
    }).join('');
</script>
</body>
</html>
